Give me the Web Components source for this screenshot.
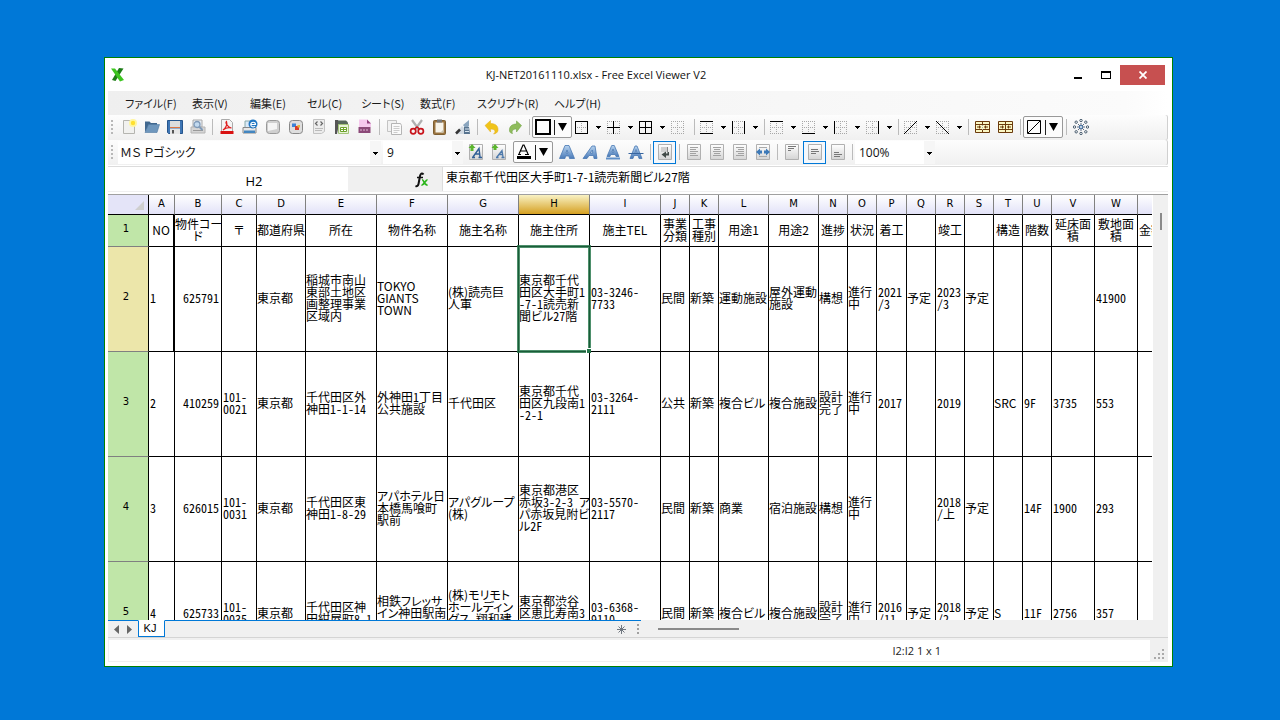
<!DOCTYPE html>
<html lang="ja">
<head>
<meta charset="utf-8">
<title>KJ-NET20161110.xlsx - Free Excel Viewer V2</title>
<style>
html, body { height: 100%; }
body {
  margin: 0; box-sizing: border-box; padding: 57px 107px 53px 104px;
  background: #0078d7; color: #000; display: flex; overflow: hidden;
  font: 12px/16px "Open Sans", "Noto Sans CJK JP", sans-serif;
}
</style>
</head>
<body>
<viewer-window>
  <title-bar slot="title">KJ-NET20161110.xlsx - Free Excel Viewer V2</title-bar>
  <menu-bar></menu-bar>
  <tool-strip label="標準">
    <tool-button icon="new" label="新規"></tool-button>
    <tool-button icon="open" label="開く"></tool-button>
    <tool-button icon="save" label="保存"></tool-button>
    <tool-button icon="preview" label="プレビュー"></tool-button>
    <tool-sep></tool-sep>
    <tool-button icon="pdf" label="PDF"></tool-button>
    <tool-button icon="html" label="HTML"></tool-button>
    <tool-button icon="image" label="画像"></tool-button>
    <tool-button icon="color" label="カラー画像"></tool-button>
    <tool-button icon="xml" label="XML"></tool-button>
    <tool-button icon="csv" label="CSV"></tool-button>
    <tool-button icon="ods" label="書き出し"></tool-button>
    <tool-sep></tool-sep>
    <tool-button icon="copy" label="コピー"></tool-button>
    <tool-button icon="cut" label="切り取り"></tool-button>
    <tool-button icon="paste" label="貼り付け"></tool-button>
    <tool-button icon="brush" label="書式"></tool-button>
    <tool-sep></tool-sep>
    <tool-button icon="undo" label="元に戻す"></tool-button>
    <tool-button icon="redo" label="やり直し"></tool-button>
    <tool-sep></tool-sep>
    <tool-button icon="thick" framed label="罫線の色"></tool-button>
    <tool-button icon="b-outer" split label="外枠"></tool-button>
    <tool-button icon="b-inner" split label="内側"></tool-button>
    <tool-button icon="b-all" split label="格子"></tool-button>
    <tool-button icon="b-none" small label="枠なし"></tool-button>
    <tool-sep></tool-sep>
    <tool-button icon="b-tb" split label="上下"></tool-button>
    <tool-button icon="b-lr" split label="左右"></tool-button>
    <tool-sep></tool-sep>
    <tool-button icon="b-top" split label="上"></tool-button>
    <tool-button icon="b-bottom" split label="下"></tool-button>
    <tool-button icon="b-left" split label="左"></tool-button>
    <tool-button icon="b-right" split label="右"></tool-button>
    <tool-sep></tool-sep>
    <tool-button icon="b-up" split label="右上がり"></tool-button>
    <tool-button icon="b-down" split label="右下がり"></tool-button>
    <tool-sep></tool-sep>
    <tool-button icon="merge" label="結合"></tool-button>
    <tool-button icon="unmerge" label="結合解除"></tool-button>
    <tool-sep></tool-sep>
    <tool-button icon="diag" framed label="斜線"></tool-button>
    <tool-sep></tool-sep>
    <tool-button icon="burst" label="設定"></tool-button>
  </tool-strip>
  <tool-strip label="書式">
    <tool-combo wide label="フォント">ＭＳ Ｐゴシック</tool-combo>
    <tool-combo label="サイズ">9</tool-combo>
    <tool-button icon="grow" label="拡大"></tool-button>
    <tool-button icon="shrink" label="縮小"></tool-button>
    <tool-button icon="fontcolor" framed spaced label="文字色"></tool-button>
    <tool-button icon="bold" label="太字"></tool-button>
    <tool-button icon="italic" label="斜体"></tool-button>
    <tool-button icon="underline" label="下線"></tool-button>
    <tool-button icon="strike" label="取り消し線"></tool-button>
    <tool-sep></tool-sep>
    <tool-button icon="wrap" active label="折り返し"></tool-button>
    <tool-sep></tool-sep>
    <tool-button icon="a-left" label="左揃え"></tool-button>
    <tool-button icon="a-center" label="中央揃え"></tool-button>
    <tool-button icon="a-right" label="右揃え"></tool-button>
    <tool-button icon="a-dist" label="均等割り付け"></tool-button>
    <tool-sep></tool-sep>
    <tool-button icon="v-top" label="上揃え"></tool-button>
    <tool-button icon="v-mid" active label="上下中央"></tool-button>
    <tool-button icon="v-bot" label="下揃え"></tool-button>
    <tool-sep></tool-sep>
    <tool-combo label="倍率">100%</tool-combo>
  </tool-strip>
  <formula-bar cell="H2" value="東京都千代田区大手町1-7-1読売新聞ビル27階"></formula-bar>
  <data-sheet></data-sheet>
  <sheet-tabs name="KJ"></sheet-tabs>
  <status-bar>I2:I2 1 x 1</status-bar>
</viewer-window>

<script>
const define = (name, html, init) => customElements.define(name, class extends HTMLElement {
  connectedCallback() {
    if (this.shadowRoot) return;
    this.attachShadow({ mode: "open" }).innerHTML = html;
    if (init) init(this, this.shadowRoot);
  }
});

/* ---------- icon artwork ---------- */
const line = (x1, y1, x2, y2, c = "#000", w = 1, extra = "") =>
  `<path d="M${x1} ${y1}L${x2} ${y2}" stroke="${c}" stroke-width="${w}" ${extra}/>`;
const dots = `<path d="M0 .5H13M0 6.5H13M0 12.5H13M.5 0V13M6.5 0V13M12.5 0V13" stroke="#a8a8a8" stroke-dasharray="1 1"/>`;
const border = d => ({ box: 13, art: dots + `<path d="${d}" stroke="#000"/>`, crisp: true });
const shades = `<linearGradient id="g" x2="0" y2="1"><stop offset="0" stop-color="#fff"/><stop offset="1" stop-color="#d4d4d4"/></linearGradient>
<linearGradient id="b" x2="0" y2="1"><stop offset="0" stop-color="#b8d4f0"/><stop offset="1" stop-color="#4a7ab8"/></linearGradient>`;
const tile = `<path d="M1.5.5h13v15h-13z" fill="url(#g)" stroke="#b0b0b0"/>`;
const cells = mid => `<path d="M.5 2.5h14v11H.5z" fill="#fbf7c4" stroke="#6b3a0c"/><path d="M0 5.5h15M0 10.5h15M7.5 2v3M7.5 11v3" stroke="#6b3a0c"/>
   <path d="M2 8h4M4.500 6.500v3M9 8h4M10.500 6.500v3" stroke="#6b3a0c"/>` + mid;

const ICONS = {
  new: `<path d="M2.5 1.5h11v13h-11z" fill="#f1f1ef" stroke="#b5b5b0"/><circle cx="12" cy="4" r="4" fill="#fff6a0"/><circle cx="12" cy="4" r="2.200" fill="#ffe030"/>`,
  open: `<path d="M1 13V2.500h4.500l1.500 1.500h6V7h-8z" fill="#41688f"/><path d="M1 13.500 4.500 5.500h11L13 13.500z" fill="#6f97bd" stroke="#527ba3" stroke-width=".6"/>`,
  save: `<path d="M.5 1.500h15v13H1.500l-1-1z" fill="#3f76b5" stroke="#26558c"/><path d="M3 2h10v6H3z" fill="#ddd"/><path d="M3 9.500h10V15H3z" fill="#e6e6e6"/><path d="M5 11h2v3.500H5z" fill="#555"/><path d="M3 8.500h10" stroke="#d74"/>`,
  preview: `<path d="M3 1h9v7H3z" fill="#e8eef5" stroke="#aaa"/><path d="M1 8h14v6H1z" fill="#d5d5d5" stroke="#b4b4b4"/><path d="M3 11.500h10" stroke="#999"/><circle cx="7" cy="5.500" r="3" fill="#c2daf0" stroke="#7f9ab8" stroke-width="1.300"/><path d="m9.500 8 3 3" stroke="#7f9ab8" stroke-width="2"/>`,
  pdf: `<path d="M2.500.5h8l3 3v11h-11z" fill="#f4f4f4" stroke="#aaa"/><path d="M1.500 12h13v3h-13z" fill="#d91212"/><path d="M4 11c3-2 4.500-6 3.500-8.500-1.500 1 1 6 5 6.500-3-1-6 0-8.500 2" fill="none" stroke="#e02020" stroke-width="1.200"/>`,
  html: `<path d="M3 2h9v7H3z" fill="#dbe9f7" stroke="#8aa"/><path d="M1 8.500h13V14H1z" fill="#e8e8e8" stroke="#888"/><path d="M2 11.500h11V14H2z" fill="#4386c0"/><circle cx="11" cy="5" r="4.500" fill="#1f76c2"/><path d="M8.500 5.500h5c0-3-4.500-3-4.700 0-.2 2.500 3 3 4.200 1.500" fill="none" stroke="#fff" stroke-width="1.200"/>`,
  image: `<rect x="1.500" y="1.500" width="13" height="13" rx="3" fill="#cfcfcf" stroke="#999"/><path d="M3 4h9v6l-9 2z" fill="#f4f4f4"/>`,
  color: `<rect x="1.500" y="1.500" width="13" height="13" rx="3" fill="#dedede" stroke="#888"/><path d="M4 4.500h4V8H4z" fill="#3b83d8"/><path d="M7 7h4v4H7z" fill="#d93a2a"/><path d="M9.500 6H12v2.500H9.500z" fill="#e8b53a"/>`,
  xml: `<path d="M2.5.5h11v12l-3 2h-8z" fill="#ececec" stroke="#c2c2c2"/><path d="m6.500 2.500-2 2 2 2M9.500 2.500l2 2-2 2" fill="none" stroke="#666" stroke-width="1.200"/><path d="M4 9.500h8M4 11.500h7" stroke="#bbb"/>`,
  csv: `<path d="M1 1h3l1 4-2 10H1z" fill="#555"/><path d="M4 1.500h8l2 2V6H4z" fill="#56675a"/><path d="M4.500 5.500h10v9h-10z" fill="#e8f3d8" stroke="#a4c47a"/><path d="M6.500 8.500h6v4h-6zM9.500 8.500v4M6.500 10.500h6" fill="#fff" stroke="#6da32c"/>`,
  ods: `<path d="M2 .5h8l4 4V8H2z" fill="#f6c9ee"/><path d="M10 .5v4h4z" fill="#92427f"/><path d="M1.500 8h12v6h-12z" fill="#8c4a79"/><path d="M3 11h9" stroke="#e3b9d9" stroke-dasharray="2 1"/>`,
  copy: `<path d="M1.500 1.500h9v11h-9z" fill="#f2f2f2" stroke="#c4c4c4"/><path d="M5.500 4.500h9l1 2v9h-10z" fill="#fafafa" stroke="#b5b5b5"/><path d="M7.500 7.500h6M7.500 9.500h6M7.500 11.500h6M7.500 13.500h4" stroke="#ccc"/>`,
  cut: `<path d="m3 1 6.500 9M13 1 6.500 10" stroke="#b0b0b0" stroke-width="2.200"/><circle cx="4.200" cy="12.200" r="2.600" fill="none" stroke="#c8141c" stroke-width="1.700"/><circle cx="11.800" cy="12.200" r="2.600" fill="none" stroke="#c8141c" stroke-width="1.700"/><path d="m5.500 10 2.500-2 2.500 2" stroke="#c8141c" stroke-width="1.600" fill="none"/>`,
  paste: `<rect x="1.500" y="1.500" width="12" height="14" rx="1" fill="#9b7440" stroke="#7d5e30"/><path d="M3.500 3.500h8v10h-8z" fill="#f7f4ea"/><path d="M5 .5h5v3H5z" fill="#777"/><path d="m11.500 10.500-3 3h3z" fill="#c9c3b2"/>`,
  brush: `<path d="m1 14 6-7 3 3v5H1z" fill="#d3dbe3"/><path d="m1 14.500 4-4" stroke="#333" stroke-width="2.500"/><path d="m8 6 6-5v6l-3 3z" fill="#8aa5be"/><path d="M9 8h5l1 7H9z" fill="#58748f"/><path d="M10 10h4M10 12.500h4" stroke="#dce8f2"/>`,
  undo: `<path d="M1 6.500 6.500 1.500v3c5 0 8 2.500 7.500 7-.3 2.200-2.500 3.500-4.500 3.500 2.500-2 2-5-3-5v3z" fill="#f0c419" stroke="#e2ad20" stroke-width=".5"/>`,
  redo: `<path d="M14.500 6.500 9.500 2v3C5 5 2 7.500 2.500 12c.3 1.600 1.600 2.500 3 2.500-1.200-2.600.5-4.500 4-4.500v3z" fill="#8fbc5c" stroke="#74a548" stroke-width=".6"/>`,
  thick: { box: 16, art: `<path d="M1 1h14v14H1z" fill="none" stroke="#000" stroke-width="2"/>`, crisp: true },
  diag: { box: 16, art: `<path d="M1.500 1.500h13v13h-13z" fill="none" stroke="#000"/><path d="M2 14 14 2" stroke="#000"/>` },
  fontcolor: { box: 16, art: `<path d="M1 12h14v3H1z" fill="#000"/><path d="m3 10 4-9h1l4 9M4.500 7h6M2 10.500h3M9 10.500h4" fill="none" stroke="#000" stroke-width="1.200"/>` },
  "b-outer": border("M.5.5h12v12H.5z"), "b-inner": border("M6.5 0v13M0 6.5h13"),
  "b-all": border("M.5.5h12v12H.5zM6.5 0v13M0 6.5h13"), "b-none": border("M0 0"),
  "b-tb": border("M0 .5h13M0 12.5h13"), "b-lr": border("M.5 0v13M12.5 0v13"),
  "b-top": border("M0 .5h13"), "b-bottom": border("M0 12.5h13"),
  "b-left": border("M.5 0v13"), "b-right": border("M12.5 0v13"),
  "b-up": { box: 13, art: dots + line(0, 13, 13, 0) }, "b-down": { box: 13, art: dots + line(0, 0, 13, 13) },
  merge: cells(line(7.5, 6, 7.5, 11, "#aaa", 1, 'stroke-dasharray="1 1"')),
  unmerge: cells(line(7.5, 5, 7.5, 11, "#6b3a0c")),
  burst: `<path d="M8 4v8M4 8h8M5 5l6 6M11 5l-6 6" stroke="#5d6d83"/><circle cx="8" cy="8" r="1.500" fill="#fff" stroke="#3b6ea5"/>` +
    [[8, 1.5], [12.8, 3.2], [14.5, 8], [12.8, 12.8], [8, 14.5], [3.2, 12.8], [1.5, 8], [3.2, 3.2]].map(([x, y]) => `<circle cx="${x}" cy="${y}" r="1.200" fill="#fff" stroke="#34495e" stroke-width=".9"/>`).join(""),
  grow: tile + `<path d="M2.500 7V4H.5L4 0l3.500 4h-2v3z" fill="#5bb52e"/><path d="m5 13 6-8.500 1 8.500M7 10h5M4 13.500h3M10.500 13.500h3.500" fill="none" stroke="#315f96" stroke-width="1.400"/>`,
  shrink: tile + `<path d="M2.500 6V4H.5L4 0l3.500 4h-2v2z" fill="#5bb52e"/><path d="m6 13 5-6.500 1 6.500M7.500 10.500h4M5 13.500h2.500M10.500 13.500h3" fill="none" stroke="#4d79ab" stroke-width="1.300"/>`,
  bold: `<path d="M.5 14.500 6 1.500h4l5.500 13h-5L10 12H6.500L6 14.500zM7 9h2L8 6z" fill="url(#b)" fill-rule="evenodd" stroke="#4877b3" stroke-width=".8"/>`,
  italic: `<path d="M1 14.500 10 2h3l2 12.500h-3l-.4-3H7l-2 3zM8.300 9h2.500l-.5-3z" fill="url(#b)" fill-rule="evenodd" stroke="#4877b3" stroke-width=".8"/>`,
  underline: `<path d="m2 12.500 4.700-11h2.600l4.700 11h-3l-.7-2H5.700L5 12.500zM7 8h2L8 5z" fill="url(#b)" fill-rule="evenodd" stroke="#4877b3" stroke-width=".8"/><path d="M1 14.500h14" stroke="#5e8fc8" stroke-width="2"/>`,
  strike: `<path d="M2 14.500 7 2h2l5 12.500h-3l-1-3H6l-1 3zM7 9h2L8 5.500z" fill="url(#b)" fill-rule="evenodd" stroke="#4877b3" stroke-width=".8"/><path d="M.5 9.500h15" stroke="#37659f"/>`,
  wrap: tile + `<path d="M4 3h6v5H4z" fill="#d0d0d0"/><path d="M10.500 3v5" stroke="#888"/><path d="M12 8v3.500H9V14L4.500 10.500 9 7.500v2h1.500V8z" fill="#424b48"/>`,
  "a-left": tile + `<path d="M4 3.500h8M4 5.500h6M4 7.500h8M4 9.500h6M4 11.500h8" stroke="#a2a2a2"/>`,
  "a-center": tile + `<path d="M4 3.500h8M5 5.500h6M4 7.500h8M5 9.500h6M4 11.500h8" stroke="#a2a2a2"/>`,
  "a-right": tile + `<path d="M4 3.500h8M6 5.500h6M4 7.500h8M6 9.500h6M4 11.500h8" stroke="#a2a2a2"/>`,
  "a-dist": tile + `<path d="M4 3.500h8M4 12.500h8" stroke="#aaa"/><path d="m1 8 4-3.500v2h2v3H5v2zM15 8l-4-3.500v2H9v3h2v2z" fill="#3e7ab8"/>`,
  "v-top": tile + `<path d="M4 2.500h8M4 4.500h6M4 6.500h3" stroke="#777"/>`,
  "v-mid": tile + `<path d="M4 5.500h7M4 7.500h8M4 9.500h5" stroke="#777"/>`,
  "v-bot": tile + `<path d="M4 8.500h5M4 10.500h8M4 12.500h6" stroke="#777"/>`
};
const drawIcon = name => {
  const i = ICONS[name], box = i.box || 16;
  return `<svg width="${box}" height="${box}" viewBox="0 0 ${box} ${box}" fill="none" ${i.crisp ? 'shape-rendering="crispEdges"' : ""} aria-hidden="true"><defs>${shades}</defs>${i.art || i}</svg>`;
};
const caret = `<svg class="caret" width="5" height="3" viewBox="0 0 5 3" shape-rendering="crispEdges" aria-hidden="true"><path d="M0 0h5v1H4v1H3v1H2V2H1V1H0z"/></svg>`;

/* ---------- window frame ---------- */
define("viewer-window", `<style>
:host { display: flex; flex-direction: column; flex: 1; min-width: 0; box-sizing: border-box; background: #fff; border: 1px solid #008000; }
main { display: flex; flex-direction: column; flex: 1; min-height: 0; padding: 0 4px 4px 3px; overflow: hidden; }
</style><slot name="title"></slot><main><slot></slot></main>`);

define("title-bar", `<style>
:host { display: flex; height: 33px; align-items: center; padding: 0 7px 0 6px; }
.logo { display: block; }
h1 { flex: 1; margin: 0; padding-left: 4px; font: inherit; font-size: 11px; text-align: center; color: #111; white-space: nowrap; }
nav { display: flex; }
button { border: 0; padding: 0; width: 28px; height: 20px; background: none; display: grid; place-items: center; }
.close { width: 45px; background: #c75050; }
</style>
<svg class="logo" width="13" height="15" viewBox="0 0 13 15" aria-hidden="true"><path d="M12.500 1.500 8 1 1 13l3.500 1z" fill="#1d7c17"/><path d="M0 1.500h4L13 13l-4 1.500z" fill="#3cc51f"/></svg>
<h1><slot></slot></h1>
<nav>
<button aria-label="最小化"><svg width="10" height="10"><path d="M1 7h8v2H1z"/></svg></button>
<button aria-label="最大化"><svg width="10" height="8" shape-rendering="crispEdges"><path d="M0 0h10v8H0zM1 2v5h8V2z" fill-rule="evenodd"/></svg></button>
<button class="close" aria-label="閉じる"><svg width="8" height="8"><path d="m.5.5 7 7m0-7-7 7" stroke="#fff" stroke-width="1.800"/></svg></button>
</nav>`);

define("menu-bar", `<style>
:host { display: block; height: 24px; flex: none; background: linear-gradient(90deg, #efefef, #fbfbfb 96%, #fff); }
ul { margin: 0; padding: 0 0 0 17px; list-style: none; display: grid; grid-template-columns: 67px 58px 57px 54px 59px 57px 77px 60px; line-height: 24px; }
a { color: #1a1a1a; text-decoration: none; white-space: nowrap; font-family: "Noto Sans CJK JP", sans-serif; font-size: 11px; font-feature-settings: "palt"; }
</style><ul></ul>`, (el, root) => {
  root.querySelector("ul").innerHTML = ["ファイル(F)", "表示(V)", "編集(E)", "セル(C)", "シート(S)", "数式(F)", "スクリプト(R)", "ヘルプ(H)"]
    .map(t => `<li><a href="#">${t}</a></li>`).join("");
});

/* ---------- toolbars ---------- */
define("tool-strip", `<style>
:host { display: flex; align-items: center; height: 25px; box-sizing: border-box; padding-bottom: 1px; flex: none; background: linear-gradient(#fdfdfd, #f0f0f0); border-radius: 0 2px 2px 0; box-shadow: inset -1px 0 #d0d0d0; }
.grip { width: 10px; height: 14px; flex: none; background: repeating-linear-gradient(#b8b8b8 0 2px, transparent 2px 4px) 3px 0 / 2px 14px no-repeat; }
:host([label="標準"]) .grip { width: 9px; }
</style><span class="grip"></span><slot></slot>`, (el, root) => {
  el.setAttribute("role", "toolbar");
  el.setAttribute("aria-label", el.getAttribute("label"));
});

define("tool-sep", `<style>
:host { display: block; width: 6px; height: 16px; flex: none; background: linear-gradient(#bbb, #bbb) 3px 0 / 1px 100% no-repeat; }
</style>`);

define("tool-button", `<style>
:host { display: block; width: 23px; flex: none; }
:host([split]) { width: 32px; }
:host([framed]) { width: 40px; }
:host([spaced]) { margin: 0 2px 0 3px; }
button { display: flex; width: 100%; height: 23px; align-items: center; justify-content: center; border: 1px solid transparent; padding: 0; background: none; box-sizing: border-box; }
svg { display: block; flex: none; }
:host([small]) button, :host([split]) button { justify-content: flex-start; padding-left: 2px; }
.caret { margin-left: 8px; }
:host([framed]) button { height: 22px; justify-content: space-between; padding: 0 4px 0 2px; border-color: #999; border-radius: 2px; background: #fcfcfc; }
.rule { width: 1px; height: 15px; background: #222; }
:host([active]) button { border-color: #0078d7; background: #f4f8fc; }
</style><button type="button"></button>`, (el, root) => {
  const b = root.querySelector("button");
  b.setAttribute("aria-label", el.getAttribute("label"));
  b.innerHTML = drawIcon(el.getAttribute("icon")) +
    (el.hasAttribute("split") ? caret : "") +
    (el.hasAttribute("framed") ? `<span class="rule"></span><svg width="9" height="8"><path d="M0 0h9L4.500 8z"/></svg>` : "");
});

define("tool-combo", `<style>
:host { display: flex; position: relative; width: 80px; height: 23px; flex: none; background: linear-gradient(270deg, #f6f6f6 11px, #fff 11px); }
:host([wide]) { width: 263px; margin-right: 2px; }
:host([label="サイズ"]) { margin-right: 1px; }
select { flex: 1; appearance: none; border: 0; background: none; padding: 0 12px 0 4px; font: inherit; font-feature-settings: "palt"; color: #111; height: 23px; line-height: 23px; }
:host([wide]) select { padding-left: 2px; }
.caret { position: absolute; right: 3px; top: 11px; pointer-events: none; }
</style><select></select>${caret}`, (el, root) => {
  const s = root.querySelector("select");
  s.setAttribute("aria-label", el.getAttribute("label"));
  s.add(new Option(el.textContent));
});

/* ---------- formula bar ---------- */
define("formula-bar", `<style>
:host { display: grid; grid-template-columns: 240px 94px 1fr; height: 24px; flex: none; border-top: 1px solid #dcdcdc; border-bottom: 1px solid #f0f0f0; margin-top: 1px; }
input { border: 0; padding: 0; margin: 0; min-width: 0; font: inherit; background: #fff; color: #000; }
.name { padding: 4px 0 0 52px; text-align: center; font-size: 13px; }
.value { padding: 0 3px 5px; border-left: 1px solid #dcdcdc; font-family: "Noto Sans CJK JP", sans-serif; font-feature-settings: "palt"; }
.fx { display: flex; align-items: center; justify-content: flex-end; padding: 1px 13px 0 0; background: #f0f0f0; }
</style>
<input class="name" aria-label="名前ボックス">
<span class="fx"><svg width="15" height="16" fill="none" aria-hidden="true"><path d="M9.500 2.500C8 .5 6.500 1.500 6 4L4.500 12c-.4 2-1.500 2.500-3 2" stroke="#111" stroke-width="2"/><path d="M3 5.500h6" stroke="#111" stroke-width="1.500"/><path d="M8 8c2-.5 2 5.500 5.500 5M13.500 7.800C11.500 7.500 10 13.500 7.500 13" stroke="#2cb51c" stroke-width="1.800"/></svg></span>
<input class="value" aria-label="数式">`, (el, root) => {
  root.querySelector(".name").value = el.getAttribute("cell");
  root.querySelector(".value").value = el.getAttribute("value");
});

/* ---------- worksheet ---------- */
const COLS = [41, 26, 47, 35, 49, 71, 71, 71, 71, 71, 29, 29, 50, 50, 29, 29, 30, 29, 29, 29, 29, 29, 43, 43];
const HEAD = ["NO", "物件コー|ド", "〒", "都道府県", "所在", "物件名称", "施主名称", "施主住所", "施主TEL", "事業|分類", "工事|種別", "用途1", "用途2", "進捗", "状況", "着工", "", "竣工", "", "構造", "階数", "延床面|積", "敷地面|積", "金額"];
const ROWS = [
  ["1", "625791", "", "東京都", "稲城市南山|東部土地区|画整理事業|区域内", "TOKYO|GIANTS|TOWN", "(株)読売巨|人軍", "東京都千代|田区大手町1|-7-1読売新|聞ビル27階", "03-3246-|7733", "民間", "新築", "運動施設", "屋外運動|施設", "構想", "進行|中", "2021|/3", "予定", "2023|/3", "予定", "", "", "", "41900", ""],
  ["2", "410259", "101-|0021", "東京都", "千代田区外|神田1-1-14", "外神田1丁目|公共施設", "千代田区", "東京都千代|田区九段南1|-2-1", "03-3264-|2111", "公共", "新築", "複合ビル", "複合施設", "設計|完了", "進行|中", "2017", "", "2019", "", "SRC", "9F", "3735", "553", ""],
  ["3", "626015", "101-|0031", "東京都", "千代田区東|神田1-8-29", "アパホテル日|本橋馬喰町|駅前", "アパグループ|(株)", "東京都港区|赤坂3-2-3 ア|パ赤坂見附ビ|ル2F", "03-5570-|2117", "民間", "新築", "商業", "宿泊施設", "構想", "進行|中", "", "", "2018|/上", "予定", "", "14F", "1900", "293", ""],
  ["4", "625733", "101-|0035", "東京都", "千代田区神|田紺屋町8-1", "相鉄フレッサ|イン神田駅南|&nbsp;", "(株)モリモト|ホールディン|グス、翔和建|&nbsp;", "東京都渋谷|区恵比寿南3|&nbsp;", "03-6368-|9110", "民間", "新築", "複合ビル", "複合施設", "設計|完了", "進行|中", "2016|/11", "予定", "2018|/2", "予定", "S", "11F", "2756", "357", ""]
];
define("data-sheet", `<style>
:host { display: grid; grid-template-columns: minmax(0, 1fr) 15px; flex: 1; min-height: 0; border-top: 1px solid #a0a0a0; margin-top: 2px; overflow: hidden; }
.view { overflow: hidden; min-height: 0; margin-right: 1px; }
.bar { background: #f0f0f0; display: flex; justify-content: center; padding-top: 18px; }
.bar i { width: 2px; height: 17px; background: #8a8a8a; }
table { border-spacing: 0; table-layout: fixed; width: 100%; font: 12px/12px "Noto Sans CJK JP", sans-serif; font-feature-settings: "palt"; }
th, td { box-sizing: border-box; padding: 0 0 2px; border: solid #000; border-width: 0 1px 1px 0; font-weight: 400; text-align: left; white-space: nowrap; overflow: hidden; vertical-align: middle; }
thead th { height: 20px; padding: 0 0 2px; text-align: center; border-right-color: #808080; background: linear-gradient(#fff, #e2e2f8); font: 10px/12px "DejaVu Sans", sans-serif; }
thead th.on { background: linear-gradient(#f9f2c4, #d5a021); }
thead th:first-child { background: #e4e4f8; text-align: right; vertical-align: bottom; border-right-color: #000; }
thead th:first-child svg { display: block; margin: 0 4px 2px auto; }
thead th:last-child, td:last-child { border-right: 0; }
tbody th { padding: 0 4px 4px 0; text-align: center; background: #c0e6a8; border-bottom-color: #808080; font: 10px/12px "DejaVu Sans", sans-serif; }
tbody th.on { background: #ece6aa; }
tbody tr { height: 105px; }
tbody tr.head { height: 32px; }
.head td { text-align: center; }
.head td:last-child { text-align: left; padding-left: 1px; }
td.heavy { border-right-width: 2px; }
.num { font-feature-settings: "hwid"; padding-left: 1px; }
td.code { text-align: right; padding-right: 2px; }
.mix { font-feature-settings: "palt", "hwid"; }
td.sel { position: relative; overflow: visible; }
.sel i { position: absolute; inset: -2px; border: 3px solid #217346; pointer-events: none; box-sizing: border-box; opacity: .8; }
.sel b { position: absolute; right: -2px; bottom: -2px; width: 5px; height: 5px; background: #217346; border: solid #fff; border-width: 1px 0 0 1px; box-sizing: border-box; }
</style>
<div class="view"><table></table></div><div class="bar"><i></i></div>`, (el, root) => {
  const letters = "ABCDEFGHIJKLMNOPQRSTUVW".split("");
  const text = s => s.replaceAll("|", "<br>");
  const kind = (s, c) => {
    const k = [];
    if (/^[\d\-|\/F上]+$/.test(s)) k.push("num");
    else if (/\d/.test(s)) k.push("mix");
    if (c === 1) k.push("code");
    return k;
  };
  let h = "<colgroup>" + COLS.map(w => `<col style="width:${w}px">`).join("") + "<col></colgroup><thead><tr>" +
    `<th aria-label="全選択"><svg width="9" height="9"><path d="M9 0v9H0z" fill="#cfcfcf"/></svg></th>` +
    letters.map(l => `<th scope="col"${l === "H" ? ' class="on"' : ""}>${l}</th>`).join("") + "<th></th></tr></thead><tbody>";
  h += `<tr class="head"><th scope="row">1</th>` + HEAD.map((s, c) => `<td${c ? "" : ' class="heavy"'}>${text(s)}</td>`).join("") + "</tr>";
  ROWS.forEach((r, n) => {
    h += `<tr><th scope="row"${n ? "" : ' class="on"'}>${n + 2}</th>` + r.map((s, c) => {
      const k = kind(s, c), sel = n === 0 && c === 7;
      if (n === 0 && c === 0) k.push("heavy");
      if (sel) k.push("sel");
      return `<td class="${k.join(" ")}">${text(s)}${sel ? "<i></i><b></b>" : ""}</td>`;
    }).join("") + "</tr>";
  });
  root.querySelector("table").innerHTML = h + "</tbody>";
});

/* ---------- sheet tabs and status ---------- */
define("sheet-tabs", `<style>
:host { display: flex; height: 17px; flex: none; background: #f0f0f0; border-bottom: 1px solid #d4d4d4; }
.tabs { display: flex; width: 533px; flex: none; box-sizing: border-box; border-top: 1px solid #0078d7; }
.arrows { display: flex; width: 30px; justify-content: center; gap: 6px; padding: 3px 0; box-sizing: border-box; }
.arrows button { border: 0; padding: 0; background: none; display: block; line-height: 0; }
.tab { width: 27px; height: 17px; box-sizing: border-box; margin-top: -1px; border: 1px solid #0078d7; border-top-color: #fff; background: #fff; padding: 0 3px 0 0; font: 11px/13px "Liberation Sans", sans-serif; color: #000; }
.add { margin-left: auto; margin-right: 10px; align-self: center; }
.add svg, .dots { display: block; }
.dots { align-self: center; margin-right: 1px; }
.scroll { flex: 1; display: flex; align-items: center; padding-left: 17px; }
.scroll i { width: 81px; height: 2px; background: #8a8a8a; }
</style>
<div class="tabs"><span class="arrows"><button aria-label="前のシート"><svg width="6" height="9"><path d="M5 0v9L0 4.500z" fill="#666"/></svg></button><button aria-label="次のシート"><svg width="6" height="9"><path d="M1 0v9l5-4.500z" fill="#666"/></svg></button></span>
<button class="tab"></button>
<span class="add"><svg width="9" height="9"><path d="M4.500 0v9M0 4.500h9M1.500 1.500l6 6m0-6-6 6" stroke="#707780"/></svg></span>
<svg class="dots" width="4" height="10"><path d="M1 0h2v2H1zM1 4h2v2H1zM1 8h2v2H1z" fill="#a0a0a0"/></svg></div>
<div class="scroll"><i></i></div>`, (el, root) => {
  root.querySelector(".tab").textContent = el.getAttribute("name");
});

define("status-bar", `<style>
:host { display: flex; height: 24px; flex: none; box-sizing: border-box; padding: 2px 0 1px; background: #f0f0f0; }
p { flex: 1; margin: 0 0 0 1px; background: #fff; color: #222; font-size: 11px; line-height: 21px; text-align: right; padding-right: 209px; }
.grip { display: flex; width: 18px; align-items: flex-end; justify-content: center; }
</style><p><slot></slot></p><span class="grip"><svg width="10" height="12" shape-rendering="crispEdges"><path d="M8 0h2v2H8zM4 4h2v2H4zM8 4h2v2H8zM0 8h2v2H0zM4 8h2v2H4zM8 8h2v2H8z" fill="#aaa"/></svg></span>`);
</script>
</body>
</html>
